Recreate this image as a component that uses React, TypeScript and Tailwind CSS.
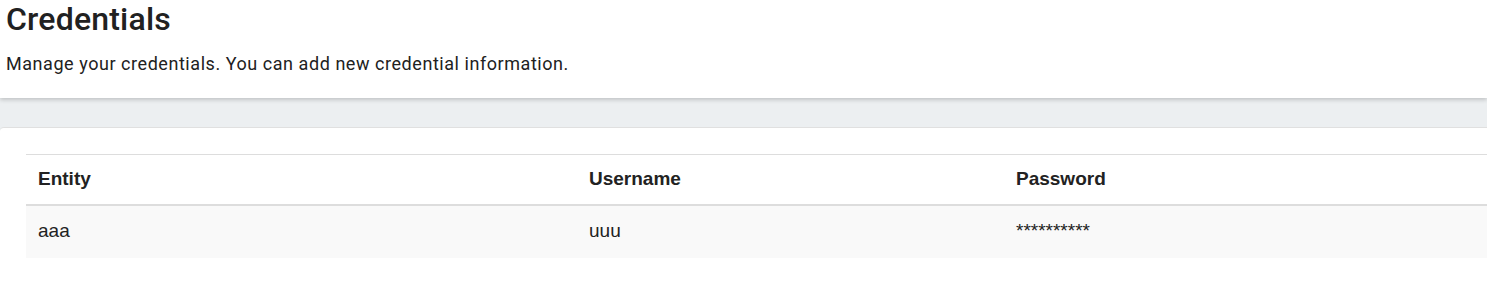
type Credential = {
  id: number;
  entity: string;
  username: string;
  password: string;
};

const credentials: Credential[] = [
  { id: 1, entity: "aaa", username: "uuu", password: "**********" },
];

export default function App() {
  return (
    <div className="min-h-screen bg-white">
      {/* Page header */}
      <header className="relative z-10 bg-white px-[6px] pb-[21px] shadow-[0_2px_4px_rgba(0,0,0,0.18)] font-['Roboto',sans-serif] text-[#212121]">
        <h1 className="text-[32px] leading-[38px] font-medium tracking-[0.2px]">Credentials</h1>
        <p className="mt-[13px] text-[18px] leading-[26px] tracking-[0.55px]">
          Manage your credentials. You can add new credential information.
        </p>
      </header>

      {/* Content area */}
      <div className="bg-[#eceff1] pt-[29px]">
        <div className="rounded-tl-[4px] border-t border-[#e0e0e0] bg-white pt-[26px] pl-[26px] pb-[32px]">
          <table className="w-full border-collapse border-t border-[#dddddd] font-['Liberation_Sans',Arial,sans-serif] text-[19px] text-[#222222]">
            <thead>
              <tr className="border-b-2 border-[#dddddd]">
                <th className="h-[50px] w-[551px] px-[12px] text-left font-bold">Entity</th>
                <th className="h-[50px] w-[427px] px-[12px] text-left font-bold">Username</th>
                <th className="h-[50px] px-[12px] text-left font-bold">Password</th>
              </tr>
            </thead>
            <tbody>
              {credentials.map((c) => (
                <tr key={c.id} className="bg-[#f9f9f9]">
                  <td className="h-[53px] px-[12px]">{c.entity}</td>
                  <td className="h-[53px] px-[12px]">{c.username}</td>
                  <td className="h-[53px] px-[12px]">{c.password}</td>
                </tr>
              ))}
            </tbody>
          </table>
        </div>
      </div>
    </div>
  );
}
